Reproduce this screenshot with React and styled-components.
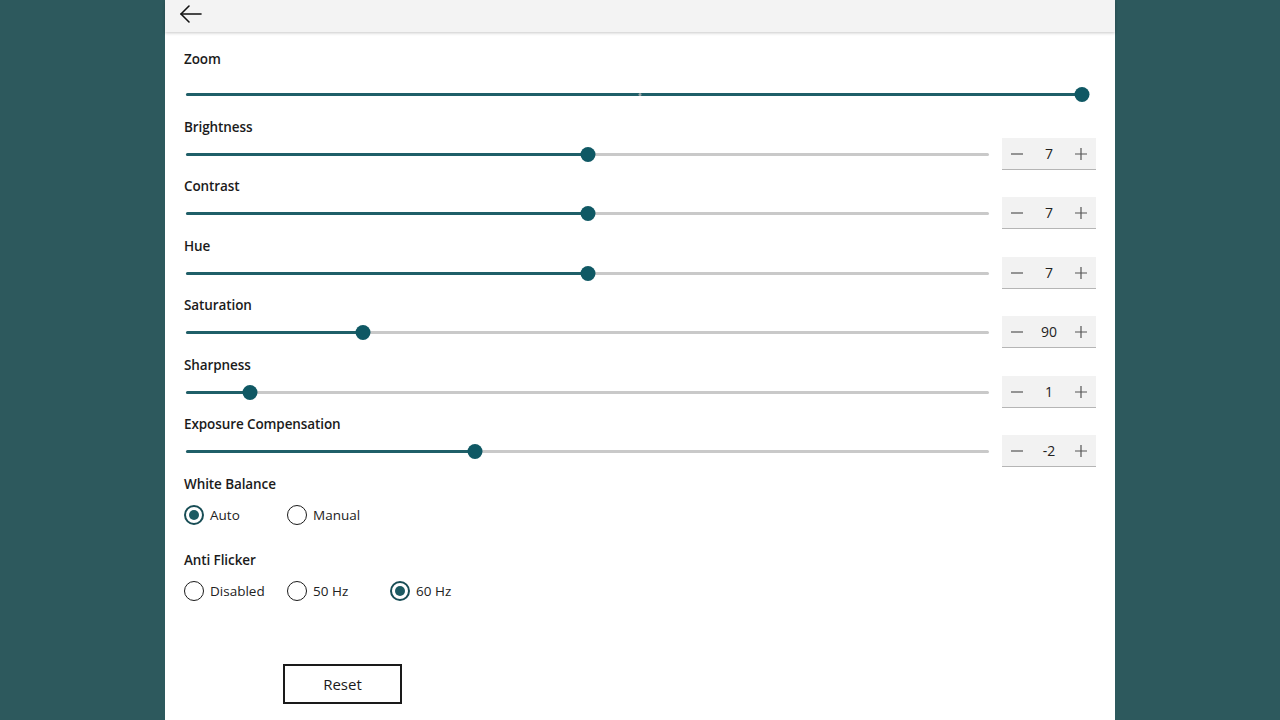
import React, { useState } from "react";
import styled, { createGlobalStyle } from "styled-components";

const Global = createGlobalStyle`
  html, body { margin: 0; padding: 0; }
  body {
    background: #2d595d;
    font-family: "Open Sans", "Noto Sans", Arial, sans-serif;
    color: #1b1b1b;
    overflow: hidden;
  }
`;

const Panel = styled.div`
  margin-left: 165px;
  width: 950px;
  height: 720px;
  background: #ffffff;
  display: flex;
  flex-direction: column;
`;

const Header = styled.div`
  height: 32px;
  flex: none;
  background: #f3f3f3;
  box-shadow: 0 1px 3px rgba(0, 0, 0, 0.22);
  display: flex;
  align-items: center;
  padding-left: 14px;
`;

const BackButton = styled.button`
  border: none;
  background: transparent;
  padding: 0;
  width: 24px;
  height: 24px;
  display: flex;
  align-items: center;
  justify-content: center;
  cursor: pointer;
  margin-top: -4px;
`;

const Content = styled.div`
  padding: 18px 19px 0 19px;
  display: flex;
  flex-direction: column;
`;

const Block = styled.div`
  display: flex;
  flex-direction: column;
  padding-bottom: ${(p) => p.$pb || 0}px;
`;

const Label = styled.div`
  font-size: 13.5px;
  font-weight: 600;
  line-height: 18px;
  height: 18px;
  margin-bottom: ${(p) => p.$mb || 0}px;
  letter-spacing: -0.1px;
`;

const Row = styled.div`
  height: 32px;
  display: flex;
  align-items: center;
  gap: 13px;
`;

const SliderWrap = styled.div`
  position: relative;
  flex: 1;
  height: 32px;
  margin-left: 2px;
  margin-right: ${(p) => p.$mr || 0}px;
`;

const Track = styled.div`
  position: absolute;
  left: 0;
  right: 0;
  top: 14.5px;
  height: 3px;
  border-radius: 2px;
  background: #c9c9c9;
`;

const Fill = styled.div`
  position: absolute;
  left: 0;
  top: 14.5px;
  height: 3px;
  border-radius: 2px;
  background: #1f5f68;
`;

const Tick = styled.div`
  position: absolute;
  top: 14.5px;
  width: 3px;
  height: 3px;
  border-radius: 50%;
  background: #9aa3a5;
  transform: translateX(-50%);
`;

const Thumb = styled.div`
  position: absolute;
  top: 8.5px;
  width: 15px;
  height: 15px;
  border-radius: 50%;
  background: #0f5864;
  transform: translateX(-50%);
`;

const Stepper = styled.div`
  width: 94px;
  height: 31px;
  background: #f2f2f2;
  border-bottom: 1px solid #b5b5b5;
  display: grid;
  grid-template-columns: 30px 1fr 30px;
  align-items: center;
  flex: none;
`;

const StepBtn = styled.button`
  border: none;
  background: transparent;
  padding: 0;
  height: 30px;
  display: flex;
  align-items: center;
  justify-content: center;
  cursor: pointer;
`;

const StepValue = styled.div`
  text-align: center;
  font-size: 14px;
  color: #222;
`;

const RadioRow = styled.div`
  display: flex;
  align-items: center;
  height: 20px;
  margin-top: ${(p) => p.$mt || 0}px;
`;

const RadioItem = styled.label`
  width: 103px;
  display: flex;
  align-items: center;
  gap: 6px;
  font-size: 13.5px;
  color: #222;
  cursor: pointer;
`;

const RadioCircle = styled.span`
  width: 20px;
  height: 20px;
  box-sizing: border-box;
  border-radius: 50%;
  border: ${(p) => (p.$checked ? "2px solid #184d55" : "1.5px solid #1b1b1b")};
  display: flex;
  align-items: center;
  justify-content: center;
  flex: none;
  &::after {
    content: "";
    width: 10px;
    height: 10px;
    border-radius: 50%;
    background: ${(p) => (p.$checked ? "#1c5a62" : "transparent")};
  }
`;

const ResetButton = styled.button`
  margin-top: 63px;
  margin-left: 99px;
  width: 119px;
  height: 40px;
  box-sizing: border-box;
  border: 2px solid #1a1a1a;
  background: #fff;
  font-family: inherit;
  font-size: 15px;
  color: #1a1a1a;
  cursor: pointer;
`;

const ArrowIcon = () => (
  <svg width="24" height="24" viewBox="0 0 24 24" fill="none" stroke="#111" strokeWidth="1.6" strokeLinecap="round" strokeLinejoin="round">
    <path d="M22 12H2" />
    <path d="M10 4L2 12L10 20" />
  </svg>
);

const MinusIcon = () => (
  <svg width="14" height="14" viewBox="0 0 14 14" stroke="#555" strokeWidth="1.2">
    <path d="M1 7H13" />
  </svg>
);

const PlusIcon = () => (
  <svg width="14" height="14" viewBox="0 0 14 14" stroke="#555" strokeWidth="1.2">
    <path d="M1 7H13M7 1V13" />
  </svg>
);

const Slider = ({ frac, mr, tick }) => (
  <SliderWrap $mr={mr}>
    <Track />
    <Fill style={{ width: `${frac * 100}%` }} />
    {tick != null && <Tick style={{ left: `${tick * 100}%` }} />}
    <Thumb style={{ left: `${frac * 100}%` }} />
  </SliderWrap>
);

const controls = [
  { name: "Brightness", frac: 0.5, value: "7" },
  { name: "Contrast", frac: 0.5, value: "7" },
  { name: "Hue", frac: 0.5, value: "7" },
  { name: "Saturation", frac: 0.22, value: "90" },
  { name: "Sharpness", frac: 0.08, value: "1" },
  { name: "Exposure Compensation", frac: 0.36, value: "-2" },
];

const Radio = ({ label, checked, onClick }) => (
  <RadioItem onClick={onClick}>
    <RadioCircle $checked={checked} />
    {label}
  </RadioItem>
);

export default function App() {
  const [wb, setWb] = useState("Auto");
  const [af, setAf] = useState("60 Hz");
  return (
    <>
      <Global />
      <Panel>
        <Header>
          <BackButton aria-label="Back">
            <ArrowIcon />
          </BackButton>
        </Header>
        <Content>
          <Block $pb={8}>
            <Label $mb={10}>Zoom</Label>
            <Row>
              <Slider frac={1} mr={14} tick={0.507} />
            </Row>
          </Block>
          {controls.map((c, i) => (
            <Block key={c.name} $pb={i % 2 === 0 ? 7 : 8}>
              <Label $mb={2}>{c.name}</Label>
              <Row>
                <Slider frac={c.frac} />
                <Stepper>
                  <StepBtn aria-label="decrease"><MinusIcon /></StepBtn>
                  <StepValue>{c.value}</StepValue>
                  <StepBtn aria-label="increase"><PlusIcon /></StepBtn>
                </Stepper>
              </Row>
            </Block>
          ))}
          <Block $pb={26}>
            <Label>White Balance</Label>
            <RadioRow $mt={12}>
              {["Auto", "Manual"].map((o) => (
                <Radio key={o} label={o} checked={wb === o} onClick={() => setWb(o)} />
              ))}
            </RadioRow>
          </Block>
          <Block>
            <Label>Anti Flicker</Label>
            <RadioRow $mt={12}>
              {["Disabled", "50 Hz", "60 Hz"].map((o) => (
                <Radio key={o} label={o} checked={af === o} onClick={() => setAf(o)} />
              ))}
            </RadioRow>
          </Block>
          <div>
            <ResetButton>Reset</ResetButton>
          </div>
        </Content>
      </Panel>
    </>
  );
}
